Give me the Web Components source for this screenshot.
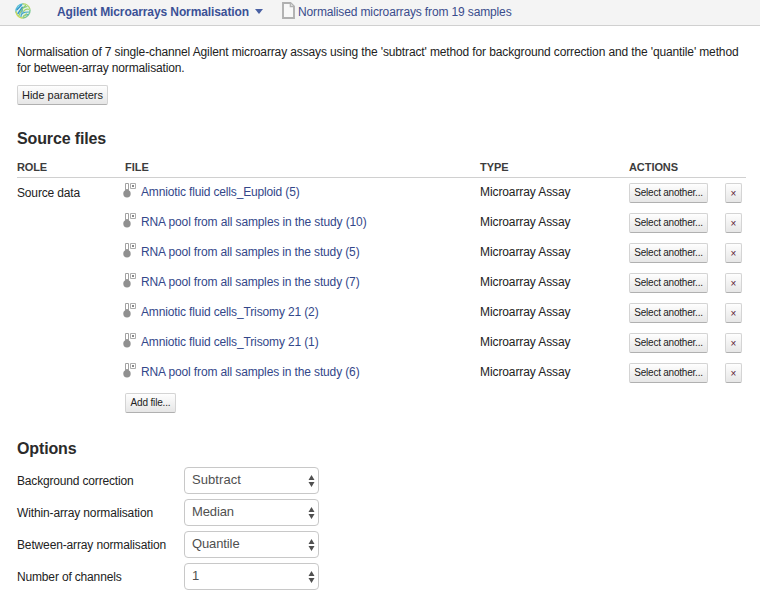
<!DOCTYPE html>
<html lang="en">
<head>
<meta charset="utf-8">
<title>Agilent Microarrays Normalisation</title>
<style>
body { margin: 0; background: #fff; color: #222; font: 12px/16px "Liberation Sans", Arial, sans-serif; overflow: hidden; }
</style>
</head>
<body>
<normalisation-page></normalisation-page>
<script>
function define(name, css, html, ready) {
  const template = document.createElement('template');
  template.innerHTML = '<style>' + css + '</style>' + html;
  customElements.define(name, class extends HTMLElement {
    connectedCallback() {
      if (this.shadowRoot) return;
      this.attachShadow({ mode: 'open' }).append(template.content.cloneNode(true));
      if (ready) ready(this, this.shadowRoot);
    }
  });
}

/* A line of text whose tracking is adjusted to the width in its "w" attribute. */
define('fit-text', ':host{display:inline-block;white-space:nowrap;vertical-align:top}', '<slot></slot>', el => {
  const w = parseFloat(el.getAttribute('w'));
  const natural = el.getBoundingClientRect().width;
  if (w && natural) el.style.letterSpacing = (w - natural) / el.textContent.length + 'px';
});

define('brand-logo', ':host{display:block;width:16px;height:16px}svg{display:block}', `
<svg width="16" height="16" viewBox="0 0 16 16" fill="none" stroke-linecap="round">
  <circle cx="8" cy="8" r="7.6" fill="#e3f3ea"/>
  <path d="M.9 9C.8 4 4 1 8 .9" stroke="#58bfd6" stroke-width="1.4"/>
  <path d="M8 .9c3-.1 6 2 6.800 5" stroke="#b4d968" stroke-width="1.4"/>
  <path d="M15 7c.2 4-3 7.700-7 8" stroke="#7cc98f" stroke-width="1.400"/>
  <path d="M1 9c.8 3 3 5.600 6 6" stroke="#c8da5e" stroke-width="1.400"/>
  <path d="M2.200 6.500 6.400 2M3 10.500 7.500 4l-.7 5" stroke="#2f95cf" stroke-width="1.400"/>
  <path d="M4 12.500c2-5 4-8 6.500-10M8 5l4-1.500" stroke="#8acb78" stroke-width="1.200"/>
  <path d="M6 13.500c-.2-3 2-4.500 7.500-4.500M9 12.500l4-1" stroke="#41a6c6" stroke-width="1.200"/>
  <path d="M8.500 8.300c2-3 3.500-2.500 5-2M8 14l3.500-3.200" stroke="#a3d068" stroke-width="1.200"/>
</svg>`);

define('page-icon', ':host{display:block;width:13px;height:17px}svg{display:block}', `
<svg width="13" height="17" viewBox="0 0 13 17">
  <path d="M1 1h7.500L12 4.500V16H1z" fill="#f8f8f8" stroke="#b0b0b0" stroke-width="1.900"/>
  <path d="M8.300 1v3.700H12" fill="#ddd" stroke="#b0b0b0" stroke-width="1.200"/>
</svg>`);

define('assay-icon', ':host{display:block;width:14px;height:16px}svg{display:block}', `
<svg width="14" height="16" viewBox="0 0 14 16">
  <path d="M2.500 9V1.500h3V9" fill="#fff" stroke="#a2a2a2"/>
  <path d="M2 7h4v3H2z" fill="#a2a2a2"/>
  <circle cx="4" cy="11.700" r="3.700" fill="#909090"/>
  <path d="M7.500 1.500h5v5h-5z" fill="#fff" stroke="#adadad"/>
  <path d="M9 3h2v2H9z" fill="#888"/>
</svg>`);

define('app-header', `
:host{display:flex;height:25px;background:#f4f4f4;border-bottom:1px solid #d0d0d0;color:#3a4c8c;padding-left:15px;line-height:24px;box-sizing:content-box}
brand-logo{margin-top:3px;width:42px}
b{display:flex;width:192px;color:#3b5196}
i{margin:9px 19px 0 6px;border:4.500px solid transparent;border-top:5px solid #4960a3;border-bottom:0;width:0;height:0}
page-icon{margin:2px 3px 0 0}
`, `<brand-logo></brand-logo><b><fit-text w="192">Agilent Microarrays Normalisation</fit-text></b><i></i>
<page-icon></page-icon><fit-text w="213.500">Normalised microarrays from 19 samples</fit-text>`);

define('action-button', `
:host{display:flex;justify-content:center;align-items:center;box-sizing:border-box;width:var(--w,79px);height:20px;border:1px solid #d4d4d4;border-bottom-color:#b0b0b0;border-radius:2px;background:linear-gradient(#fefefe,#e6e6e6);font-size:10px;line-height:16px;color:#222}
`, '<slot></slot>');

define('source-row', `
:host{display:grid;grid-template-columns:106px 18px 339px 149px 96px 17px;height:30px;align-items:start}
.text{padding-top:6px}
.role{padding-top:7px}
.file{color:#33478a}
assay-icon{margin-top:4px}
action-button{margin-top:5px}
.x{color:#5c2033;--w:17px;padding-top:2px}
`, `<span class="role"></span><assay-icon></assay-icon><span class="text file"><slot></slot></span>
<span class="text"><fit-text w="90.500">Microarray Assay</fit-text></span>
<action-button><fit-text w="68.500">Select another...</fit-text></action-button>
<action-button class="x">×</action-button>`, (el, root) => {
  if (el.hasAttribute('role-name')) {
    root.querySelector('.role').innerHTML = '<fit-text w="63">' + el.getAttribute('role-name') + '</fit-text>';
  }
});

define('option-row', `
:host{display:flex;height:27px;margin-bottom:5px;align-items:flex-start}
.label{width:167px;padding-top:6px}
.box{display:flex;justify-content:space-between;box-sizing:border-box;width:135px;height:27px;border:1px solid #c8c8c8;border-radius:4px;background:#fff;color:#505050;font-size:13px;padding:4px 3px 0 7px}
svg{display:block;margin-top:3px}
`, `<span class="label"><slot name="label"></slot></span><span class="box"><slot></slot>
<svg width="7" height="12" viewBox="0 0 7 12" fill="#505050"><path d="M3.500 0 6.500 5H.5zM.5 7h6L3.500 12z"/></svg></span>`);

define('normalisation-page', `
:host{display:block;height:604px}
main{display:flex;flex-direction:column;align-items:flex-start;padding:18px 14px 0 17px}
.intro{display:flex;flex-direction:column;align-items:flex-start;margin-bottom:9px}
.hide{--w:91px;font-size:11px}
h2{margin:24px 0 0;font-size:16px;line-height:20px;color:#2b2b2b}
.head{display:grid;grid-template-columns:108px 355px 149px 1fr;box-sizing:border-box;align-self:stretch;width:729px;height:29px;border-bottom:1px solid #d0d0d0;padding-top:10px;font-size:11px;font-weight:bold;color:#3c3c3c}
.add{--w:51px;margin:5px 0 0 108px}
h2.options{margin:26px 0 8px}
`, `<app-header></app-header>
<main>
<div class="intro">
<fit-text w="721.500">Normalisation of 7 single-channel Agilent microarray assays using the 'subtract' method for background correction and the 'quantile' method</fit-text>
<fit-text w="167.500">for between-array normalisation.</fit-text></div>
<action-button class="hide"><fit-text w="81">Hide parameters</fit-text></action-button>
<h2><fit-text w="89">Source files</fit-text></h2>
<div class="head"><span><fit-text w="30">ROLE</fit-text></span><span><fit-text w="24">FILE</fit-text></span><span><fit-text w="28.500">TYPE</fit-text></span><span><fit-text w="49">ACTIONS</fit-text></span></div>
<source-row role-name="Source data"><fit-text w="158.500">Amniotic fluid cells_Euploid (5)</fit-text></source-row>
<source-row><fit-text w="225.500">RNA pool from all samples in the study (10)</fit-text></source-row>
<source-row><fit-text w="218.500">RNA pool from all samples in the study (5)</fit-text></source-row>
<source-row><fit-text w="218.500">RNA pool from all samples in the study (7)</fit-text></source-row>
<source-row><fit-text w="177.500">Amniotic fluid cells_Trisomy 21 (2)</fit-text></source-row>
<source-row><fit-text w="177.500">Amniotic fluid cells_Trisomy 21 (1)</fit-text></source-row>
<source-row><fit-text w="218.500">RNA pool from all samples in the study (6)</fit-text></source-row>
<action-button class="add"><fit-text w="40">Add file...</fit-text></action-button>
<h2 class="options"><fit-text w="59.500">Options</fit-text></h2>
<option-row><fit-text slot="label" w="116.500">Background correction</fit-text><fit-text w="49">Subtract</fit-text></option-row>
<option-row><fit-text slot="label" w="136">Within-array normalisation</fit-text><fit-text w="42">Median</fit-text></option-row>
<option-row><fit-text slot="label" w="149">Between-array normalisation</fit-text><fit-text w="47.500">Quantile</fit-text></option-row>
<option-row><fit-text slot="label" w="104.500">Number of channels</fit-text><fit-text>1</fit-text></option-row>
</main>`);
</script>
</body>
</html>
